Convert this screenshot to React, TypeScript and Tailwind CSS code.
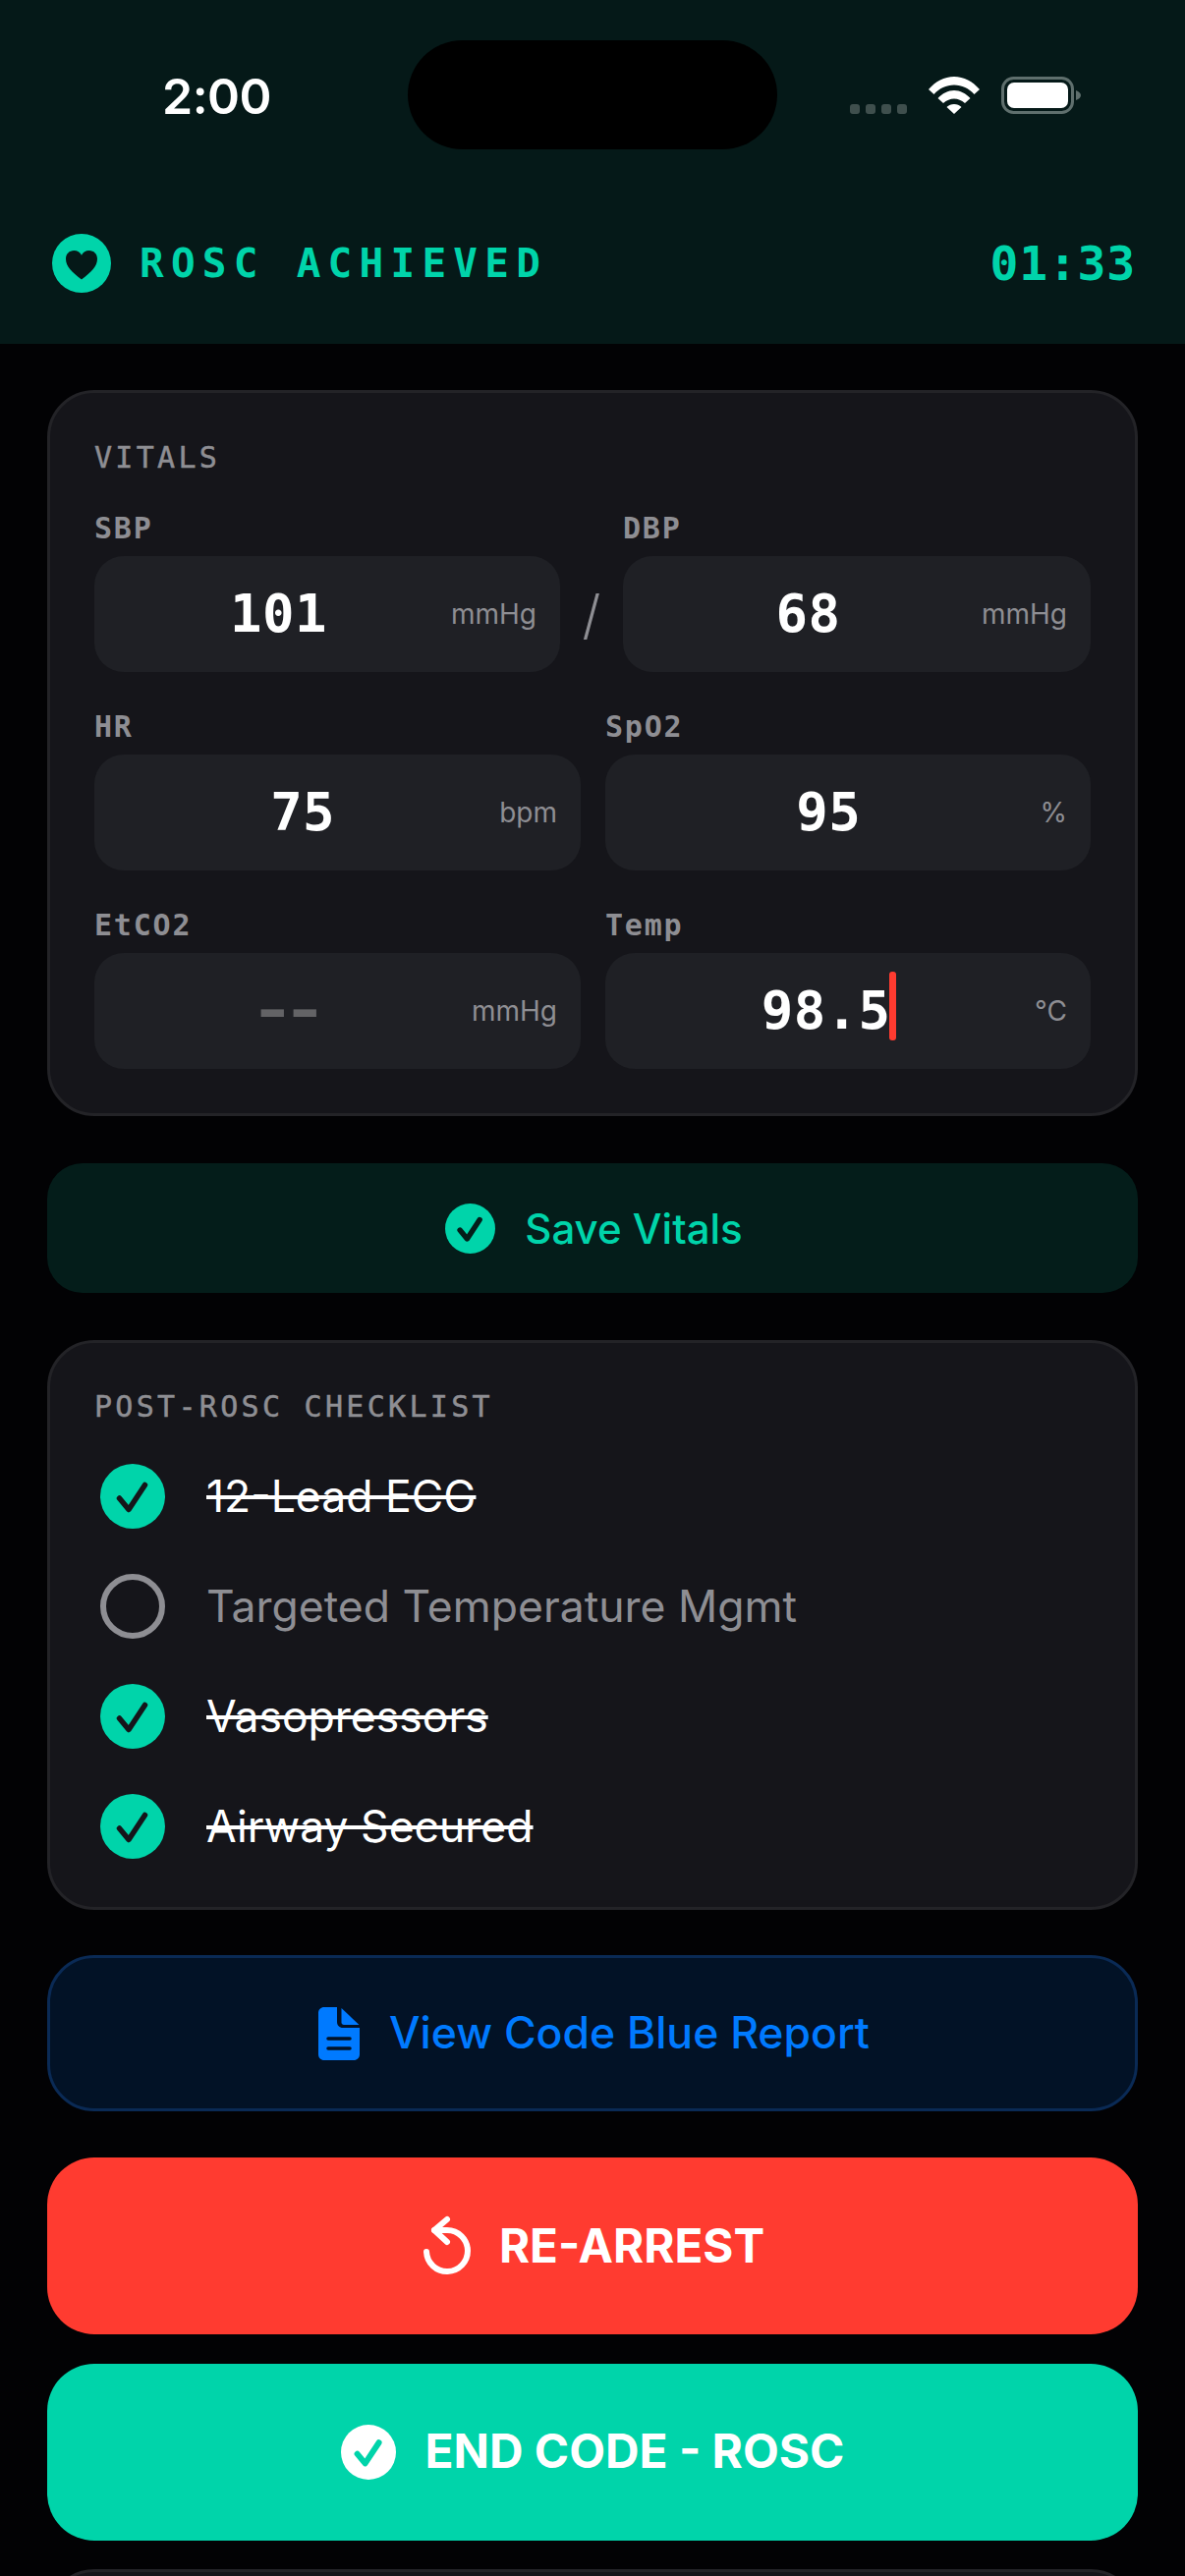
const MONO = "font-['DejaVu_Sans_Mono','Liberation_Mono',monospace]";
function Heart() {
  return (
    <svg width="60" height="60" viewBox="0 0 60 60" className="shrink-0">
      <circle cx="30" cy="30" r="30" fill="#00d4aa" />
      <path d="M30 46.500C20 39 14 33 14 25.500C14 20.500 17.500 17 22.300 17C25.800 17 28.600 18.800 30 21.800C31.400 18.800 34.200 17 37.700 17C42.500 17 46 20.500 46 25.500C46 33 40 39 30 46.500Z" fill="#051918" />
    </svg>
  );
}
function Check({ size, bg, fg, w }: { size: number; bg: string; fg: string; w: number }) {
  return (
    <svg width={size} height={size} viewBox="0 0 66 66" className="shrink-0">
      <circle cx="33" cy="33" r="33" fill={bg} />
      <path d="M19.500 35L29 46.500L45.500 21.500" fill="none" stroke={fg} strokeWidth={w} strokeLinecap="round" strokeLinejoin="round" />
    </svg>
  );
}
function Field({ label, value, unit, cursor, dim, className }: { label: string; value: string; unit: string; cursor?: boolean; dim?: boolean; className: string }) {
  return (
    <div className={className}>
      <div className={`${MONO} text-[30px] leading-[36px] pt-[2px] font-bold tracking-[1.8px] text-[#8e8e93] mb-[10px]`}>{label}</div>
      <div className="h-[118px] rounded-[30px] bg-[#1f2025] flex items-center pl-[12px] pr-[24px]">
        <div className="flex-1 text-center">
          <span className={`${MONO} text-[54px] font-bold leading-none tracking-[0.4px] ${dim ? "text-[#636366]" : "text-white"} relative`}>
            {dim ? (
              <>
                <span className="inline-block scale-x-[1.4]">-</span>
                <span className="inline-block scale-x-[1.4]">-</span>
              </>
            ) : (
              value
            )}
            {cursor && <span className="absolute right-[-6px] top-[-8px] w-[7px] h-[70px] rounded-[3px] bg-[#ff3b30]" />}
          </span>
        </div>
        <span className="text-[28px] leading-[36px] text-[#8e8e93]">{unit}</span>
      </div>
    </div>
  );
}
function Row({ text, done }: { text: string; done: boolean }) {
  return (
    <div className="h-[112px] flex items-center pl-[6px]">
      {done ? (
        <Check size={66} bg="#00d4aa" fg="#15151a" w={5.5} />
      ) : (
        <div className="w-[66px] h-[66px] rounded-full border-[6px] border-[#8e8e93] shrink-0" />
      )}
      <span className={`ml-[42px] text-[44.5px] leading-[54px] ${done ? "text-white line-through" : "text-[#8e8e93]"}`}>{text}</span>
    </div>
  );
}
export default function App() {
  return (
    <div className="w-[1206px] h-[2622px] bg-[#020204] overflow-hidden font-['Inter',sans-serif]">
      <header className="relative h-[350px] bg-[#051918] flex flex-col">
        <div className="absolute left-[415px] top-[41px] w-[376px] h-[111px] rounded-[56px] bg-black" />
        <div className="h-[238px] flex items-start justify-between pt-[70px] pl-[165px] pr-[106px]">
          <span className="text-[50px] leading-[56px] font-semibold tracking-[-0.5px] text-white">2:00</span>
          <div className="flex items-center pt-[8px] gap-[22px]">
            <div className="flex gap-[6px] mt-[27px]">
              {[0, 1, 2, 3].map((i) => (
                <span key={i} className="w-[10px] h-[10px] rounded-[3px] bg-[#3f4f4d]" />
              ))}
            </div>
            <svg width="52" height="38" viewBox="0 0 52 38">
              <path d="M0 13C7 5 16 0 26 0C36 0 45 5 52 13L46.5 18C41 12 34 8.5 26 8.5C18 8.5 11 12 5.5 18Z" fill="#fff" />
              <path d="M9.500 22C14 17 20 14 26 14C32 14 38 17 42.500 22L37 27C33.500 24 30 22.500 26 22.500C22 22.500 18.500 24 15 27Z" fill="#fff" />
              <path d="M18.500 31C20.500 29 23 28 26 28C29 28 31.500 29 33.500 31L26 38Z" fill="#fff" />
            </svg>
            <svg width="81" height="38" viewBox="0 0 81 38">
              <rect x="1.500" y="1.500" width="71" height="35" rx="11" fill="none" stroke="#5f6f6d" strokeWidth="3" />
              <rect x="6" y="6" width="62" height="26" rx="7" fill="#fff" />
              <path d="M76 14C79 15 81 17 81 19C81 21 79 23 76 24Z" fill="#5f6f6d" />
            </svg>
          </div>
        </div>
        <div className="flex items-center justify-between pl-[53px] pr-[50px]">
          <div className="flex items-center gap-[29px]">
            <Heart />
            <span className={`${MONO} text-[41px] leading-[48px] font-bold tracking-[7.25px] text-[#00d4aa]`}>ROSC ACHIEVED</span>
          </div>
          <span className={`${MONO} text-[48px] leading-[54px] font-bold tracking-[0.8px] text-[#00d4aa]`}>01:33</span>
        </div>
      </header>

      <main className="px-[48px] pt-[47px] flex flex-col">
        <section className="h-[739px] rounded-[48px] border-[3px] border-[#232327] bg-[#15151a] px-[45px] pt-[48px]">
          <div className={`${MONO} text-[30px] leading-[36px] text-[#8e8e93] tracking-[3.3px] [-webkit-text-stroke:0.5px_#8e8e93] mb-[34px]`}>VITALS</div>
          <div className="flex items-end mb-[36px]">
            <Field label="SBP" value="101" unit="mmHg" className="w-[474px]" />
            <span className="w-[64px] h-[118px] flex items-center justify-center text-[54px] font-light text-[#8e8e93]">/</span>
            <Field label="DBP" value="68" unit="mmHg" className="w-[476px]" />
          </div>
          <div className="flex justify-between mb-[36px]">
            <Field label="HR" value="75" unit="bpm" className="w-[495px]" />
            <Field label="SpO2" value="95" unit="%" className="w-[494px]" />
          </div>
          <div className="flex justify-between">
            <Field label="EtCO2" value="--" unit="mmHg" dim className="w-[495px]" />
            <Field label="Temp" value="98.5" unit="°C" cursor className="w-[494px]" />
          </div>
        </section>

        <button className="mt-[48px] h-[132px] rounded-[36px] bg-[#041d1a] flex items-center justify-center gap-[30px] pl-[3px]">
          <Check size={51} bg="#00d4aa" fg="#041d1a" w={7} />
          <span className="text-[42px] font-medium text-[#00d4aa]">Save Vitals</span>
        </button>

        <section className="mt-[48px] h-[580px] rounded-[48px] border-[3px] border-[#232327] bg-[#15151a] px-[45px] pt-[47px]">
          <div className={`${MONO} text-[30px] leading-[36px] text-[#8e8e93] tracking-[3.3px] [-webkit-text-stroke:0.5px_#8e8e93] mb-[17px]`}>POST-ROSC CHECKLIST</div>
          <Row text="12-Lead ECG" done />
          <Row text="Targeted Temperature Mgmt" done={false} />
          <Row text="Vasopressors" done />
          <Row text="Airway Secured" done />
        </section>

        <button className="mt-[46px] h-[159px] rounded-[48px] border-[3px] border-[#0a2a55] bg-[#021226] flex items-center justify-center gap-[30px] pl-[3px]">
          <svg width="42" height="54" viewBox="0 0 42 54">
            <path d="M6 0H19V15C19 18.500 21.500 21 25 21H42V48C42 51.500 39.500 54 36 54H6C2.500 54 0 51.500 0 48V6C0 2.500 2.500 0 6 0Z" fill="#007aff" />
            <path d="M23.500 1L41.500 18H26C24.500 18 23.500 17 23.500 15.500Z" fill="#007aff" />
            <path d="M10 32H32M10 42H32" stroke="#021226" strokeWidth="3.5" strokeLinecap="round" />
          </svg>
          <span className="text-[44.5px] font-medium text-[#007aff]">View Code Blue Report</span>
        </button>

        <button className="mt-[47px] h-[180px] rounded-[48px] bg-[#ff3b30] flex items-center justify-center gap-[28px]">
          <svg width="52" height="64" viewBox="0 0 52 64" fill="none" stroke="#fff" strokeWidth="6" strokeLinecap="round" strokeLinejoin="round">
            <path d="M14 16H27A21 21 0 1 1 6 38" />
            <path d="M27 5L14 16L27 28" />
          </svg>
          <span className="text-[47.5px] font-bold text-white">RE-ARREST</span>
        </button>

        <button className="mt-[30px] h-[180px] rounded-[48px] bg-[#00d4aa] flex items-center justify-center gap-[30px]">
          <Check size={56} bg="#fff" fg="#00d4aa" w={7} />
          <span className="text-[47.8px] font-bold text-white">END CODE - ROSC</span>
        </button>

        <div className="mt-[29px] h-[100px] rounded-t-[48px] border-[3px] border-[#232327] bg-[#15151a]" />
      </main>
    </div>
  );
}
